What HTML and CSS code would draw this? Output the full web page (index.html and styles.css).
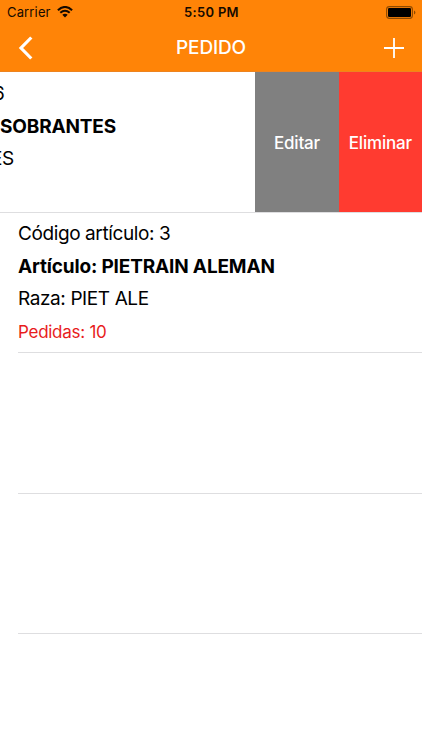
FILE: index.html
```html
<!DOCTYPE html>
<html lang="es">
<head>
  <meta charset="utf-8">
  <title>Pedido</title>
  <link rel="stylesheet" href="styles.css">
</head>
<body>
  <header class="header">
    <div class="status-bar">
      <div class="carrier">
        <span class="carrier-name">Carrier</span>
        <svg class="wifi" width="16" height="12" viewBox="0 0 16 12">
          <path d="M0.9 4.2Q8 -2.2 15.1 4.2" fill="none" stroke="#140a00" stroke-width="2.1"/>
          <path d="M3.3 6.8Q8 2.6 12.7 6.8" fill="none" stroke="#140a00" stroke-width="2"/>
          <path d="M5.3 8.8Q8 6.6 10.7 8.8L8 11.5Z" fill="#140a00"/>
        </svg>
      </div>
      <div class="time">5:50 PM</div>
      <div class="power">
        <svg width="30" height="13" viewBox="0 0 30 13">
          <rect x="0.6" y="0.6" width="25.8" height="11.8" rx="2.8" fill="none" stroke="#8f4a00" stroke-width="1.1"/>
          <rect x="2" y="2" width="23" height="9" rx="1.2" fill="#000"/>
          <path d="M28 4.5Q29.4 5 29.4 6.5Q29.4 8 28 8.5Z" fill="#8f4a00"/>
        </svg>
      </div>
    </div>
    <nav class="nav-bar">
      <svg class="back" width="16" height="24" viewBox="0 0 16 24">
        <path d="M13.3 1.5L3 12L13.3 22.5" fill="none" stroke="#fff" stroke-width="3.2"/>
      </svg>
      <h1 class="title">PEDIDO</h1>
      <svg class="add" width="20" height="20" viewBox="0 0 20 20">
        <path d="M0 10H20M10 0V20" fill="none" stroke="#fff" stroke-width="1.8"/>
      </svg>
    </nav>
  </header>

  <main class="list">
    <div class="row row-swiped">
      <div class="row-content">
        <p class="code">6</p>
        <p class="article">SOBRANTES</p>
        <p class="breed">ES</p>
      </div>
      <div class="action action-edit">Editar</div>
      <div class="action action-delete">Eliminar</div>
    </div>
    <div class="row">
      <div class="row-content">
        <p class="code">Código artículo: 3</p>
        <p class="article">Artículo: PIETRAIN ALEMAN</p>
        <p class="breed">Raza: PIET ALE</p>
        <p class="ordered">Pedidas: 10</p>
      </div>
    </div>
    <div class="row"></div>
    <div class="row"></div>
    <div class="row row-last"></div>
  </main>
</body>
</html>
```

FILE: styles.css
```css
* {
  box-sizing: border-box;
}
body {
  margin: 0;
  height: 750px;
  overflow: hidden;
  background: #fff;
  color: #000;
  font-family: Inter, "Liberation Sans", sans-serif;
}
.header {
  height: 72px;
  background: #ff8407;
  border-bottom: 1px solid #ed8420;
}
.status-bar {
  display: grid;
  grid-template-columns: 1fr auto 1fr;
  align-items: center;
  height: 24px;
  padding: 0 6px 0 7px;
  font-size: 13px;
  color: #140a00;
}
.carrier {
  display: flex;
  align-items: center;
  gap: 6px;
}
.carrier-name {
  letter-spacing: 0.15px;
}
.time {
  font-weight: 600;
  letter-spacing: 0.3px;
}
.power {
  display: flex;
  justify-content: flex-end;
}
.nav-bar {
  display: grid;
  grid-template-columns: 1fr auto 1fr;
  align-items: center;
  height: 47px;
  padding: 0 18px;
}
.title {
  margin: 0;
  font-size: 19px;
  font-weight: 500;
  letter-spacing: -0.15px;
  color: #fff;
}
.add {
  justify-self: end;
}
.row {
  display: flex;
  height: 140.4px;
  margin-left: 18px;
  border-bottom: 1px solid #dedee0;
}
.row-content {
  flex: 1;
  padding-top: 5px;
  white-space: nowrap;
}
.row-content p {
  margin: 0;
  height: 32.6px;
  line-height: 32.6px;
  font-size: 19px;
  letter-spacing: -0.4px;
}
.row-content .article {
  font-weight: 700;
  letter-spacing: -0.16px;
}
.row-content .ordered {
  font-size: 17px;
  letter-spacing: -0.27px;
  color: #e81c1c;
}
.row-swiped {
  height: 141px;
  margin-left: 0;
  overflow: hidden;
}
.row-swiped .row-content {
  padding-top: 6px;
}
.row-swiped .code {
  text-indent: -7px;
}
.row-swiped .breed {
  text-indent: -9px;
}
.row-last {
  border-bottom: none;
}
.action {
  display: flex;
  align-items: center;
  justify-content: center;
  width: 83.4px;
  padding-top: 1px;
  font-size: 17px;
  font-weight: 500;
  letter-spacing: -0.2px;
  color: #fff;
}
.action-edit {
  background: #808080;
}
.action-delete {
  background: #ff3b30;
}
```
